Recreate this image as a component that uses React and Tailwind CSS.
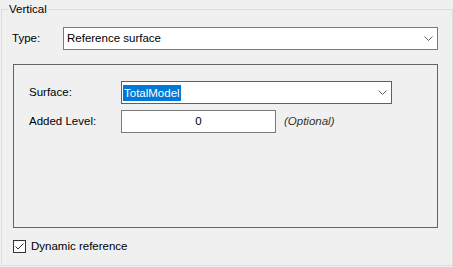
function Chevron() {
  return (
    <svg width="9" height="5" viewBox="0 0 9 5" className="shrink-0">
      <path d="M0.5 0.5 L4.5 4.5 L8.5 0.5" fill="none" stroke="#606060" strokeWidth="1" />
    </svg>
  );
}

export default function App() {
  const font = { fontFamily: '"Liberation Sans", Arial, sans-serif' };
  return (
    <div className="w-[453px] h-[267px] bg-[#f0f0f0] pt-[9px] pl-[1px] text-[11.5px] text-black" style={font}>
      <div className="relative w-[452px] h-[257px] border border-[#dcdcdc]">
        <span className="absolute left-[6px] top-[-8px] bg-[#f0f0f0] px-[1px] leading-[14px]">Vertical</span>

        <div className="flex items-center mt-[17px]">
          <span className="w-[61px] shrink-0 pl-[10px]">Type:</span>
          <div className="flex items-center justify-between w-[375px] h-[23px] border border-[#7a7a7a] bg-white pl-[3px] pr-[4px]">
            <span>Reference surface</span>
            <Chevron />
          </div>
        </div>

        <div className="ml-[11px] mt-[14px] w-[425px] h-[164px] border border-[#646464] pt-[16px]">
          <div className="flex items-center">
            <span className="w-[107px] shrink-0 pl-[15px]">Surface:</span>
            <div className="flex items-center justify-between w-[271px] h-[23px] border border-[#0078d7] bg-white pl-[1px] pr-[4px]">
              <span className="bg-[#0078d7] text-white px-[1px] leading-[16px]">TotalModel</span>
              <Chevron />
            </div>
          </div>
          <div className="flex items-center mt-[6px]">
            <span className="w-[107px] shrink-0 pl-[15px]">Added Level:</span>
            <div className="flex items-center justify-center w-[155px] h-[23px] border border-[#7a7a7a] bg-white">
              <span>0</span>
            </div>
            <span className="ml-[8px] italic text-[#333]">(Optional)</span>
          </div>
        </div>

        <div className="flex items-center ml-[11px] mt-[10px]">
          <div className="w-[13px] h-[13px] border border-[#333] bg-white flex items-center justify-center">
            <svg width="11" height="11" viewBox="0 0 11 11">
              <path d="M1.5 5.5 L4 8 L9.5 2.5" fill="none" stroke="#333" strokeWidth="1" />
            </svg>
          </div>
          <span className="ml-[5px]">Dynamic reference</span>
        </div>
      </div>
    </div>
  );
}
